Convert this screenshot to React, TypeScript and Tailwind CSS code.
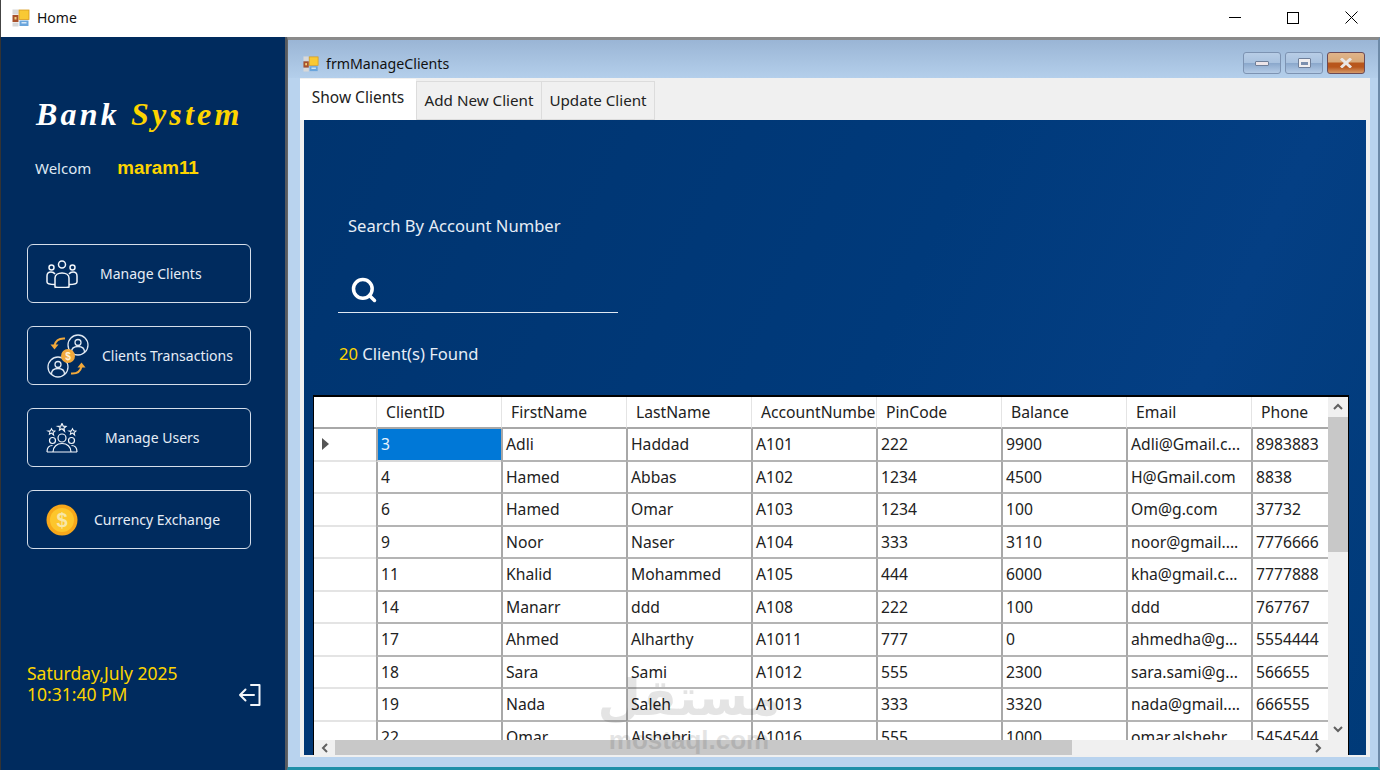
import React from 'react';
import { Search } from 'lucide-react';

const COLS = 'grid grid-cols-[62px_125px_125px_125px_125px_125px_125px_125px_77px]';

const headers = ['', 'ClientID', 'FirstName', 'LastName', 'AccountNumber', 'PinCode', 'Balance', 'Email', 'Phone'];

const rows = [
  ['3', 'Adli', 'Haddad', 'A101', '222', '9900', 'Adli@Gmail.c...', '8983883'],
  ['4', 'Hamed', 'Abbas', 'A102', '1234', '4500', 'H@Gmail.com', '8838'],
  ['6', 'Hamed', 'Omar', 'A103', '1234', '100', 'Om@g.com', '37732'],
  ['9', 'Noor', 'Naser', 'A104', '333', '3110', 'noor@gmail....', '7776666'],
  ['11', 'Khalid', 'Mohammed', 'A105', '444', '6000', 'kha@gmail.c...', '7777888'],
  ['14', 'Manarr', 'ddd', 'A108', '222', '100', 'ddd', '767767'],
  ['17', 'Ahmed', 'Alharthy', 'A1011', '777', '0', 'ahmedha@g...', '5554444'],
  ['18', 'Sara', 'Sami', 'A1012', '555', '2300', 'sara.sami@g...', '566655'],
  ['19', 'Nada', 'Saleh', 'A1013', '333', '3320', 'nada@gmail....', '666555'],
  ['22', 'Omar', 'Alshehri', 'A1016', '555', '1000', 'omar.alshehr...', '5454544'],
];

const AppIcon = ({ size = 18 }: { size?: number }) => (
  <svg width={size} height={size} viewBox="0 0 18 18" className="shrink-0">
    <rect x="0.5" y="0.5" width="6" height="5" fill="#d8d8d8" />
    <rect x="0.5" y="6" width="6" height="7" fill="#a8502a" />
    <rect x="2.5" y="8" width="2" height="2.5" fill="#f0d080" />
    <rect x="0.5" y="13.5" width="6" height="4" fill="#d8d8d8" />
    <rect x="7" y="1" width="10" height="9.5" fill="#f9c934" stroke="#d79a1c" strokeWidth="0.8" />
    <rect x="7.5" y="11.5" width="9" height="5.5" fill="#6aa5dc" />
    <rect x="9.5" y="13" width="5" height="1.5" fill="#d6e8f8" />
  </svg>
);

const PeopleIcon = () => (
  <svg width="32" height="28" viewBox="0 0 32 28" fill="none" stroke="#f2f6fb" strokeWidth="1.5">
    <circle cx="16" cy="4.5" r="3.5" />
    <circle cx="5.5" cy="7.5" r="2.5" />
    <circle cx="26.5" cy="7.5" r="2.5" />
    <path d="M9 27v-9c0-3 3-5 7-5s7 2 7 5v9c-3 .8-11 .8-14 0z" />
    <path d="M9 14c-1-1.500-2.500-2-4-2-2.500 0-4 1.500-4 4v6c0 1.500 3 2.500 8 2.500" />
    <path d="M23 14c1-1.500 2.500-2 4-2 2.500 0 4 1.500 4 4v6c0 1.500-3 2.500-8 2.500" />
  </svg>
);

const TransactionsIcon = () => (
  <svg width="44" height="44" viewBox="0 0 44 44" fill="none">
    <circle cx="32" cy="11" r="10" stroke="#dfe8f2" strokeWidth="1.3" />
    <circle cx="32" cy="8.500" r="3" stroke="#dfe8f2" strokeWidth="1.3" />
    <path d="M25.500 18c0-4 3-5.500 6.500-5.500s6.500 1.500 6.500 5.500" stroke="#dfe8f2" strokeWidth="1.3" />
    <circle cx="12" cy="33" r="10" stroke="#dfe8f2" strokeWidth="1.3" />
    <circle cx="12" cy="30.500" r="3" stroke="#dfe8f2" strokeWidth="1.3" />
    <path d="M5.500 40c0-4 3-5.500 6.500-5.500s6.500 1.500 6.500 5.500" stroke="#dfe8f2" strokeWidth="1.3" />
    <circle cx="22" cy="22" r="7" fill="#f2a93b" />
    <text x="22" y="25.500" textAnchor="middle" fontSize="10" fontWeight="700" fill="#fff3d8" fontFamily="'Liberation Sans', sans-serif">$</text>
    <path d="M19 4.500C13 4 9.500 7 8.500 11.500" stroke="#f2a93b" strokeWidth="2" />
    <path d="M4.500 10.500l4 5 4-5z" fill="#f2a93b" />
    <path d="M25 39.500c6 .5 9.500-2.500 10.500-7" stroke="#f2a93b" strokeWidth="2" />
    <path d="M31.500 33.500l4-5 4 5z" fill="#f2a93b" />
  </svg>
);

const Star = ({ x, y, s }: { x: number; y: number; s: number }) => (
  <path
    transform={`translate(${x} ${y}) scale(${s})`}
    d="M0-4l1.200 2.600 2.800.3-2.100 1.900.6 2.800L0 1.200-2.500 2.600l.6-2.800L-4-1.100l2.800-.3z"
  />
);

const UsersIcon = () => (
  <svg width="32" height="30" viewBox="0 0 32 30" fill="none" stroke="#f2f6fb" strokeWidth="1.2">
    <Star x={16} y={4.5} s={1} />
    <Star x={5.5} y={9} s={0.85} />
    <Star x={26.5} y={9} s={0.85} />
    <circle cx="16" cy="15" r="4" />
    <circle cx="6.500" cy="17.500" r="3" />
    <circle cx="25.500" cy="17.500" r="3" />
    <path d="M7 29c0-5.500 4-8.500 9-8.500s9 3 9 8.500" />
    <path d="M1 29c0-4 2-6.500 5.500-6.500M31 29c0-4-2-6.500-5.500-6.500M1 29h30" />
  </svg>
);

const CoinIcon = () => (
  <svg width="32" height="32" viewBox="0 0 32 32">
    <circle cx="16" cy="16" r="15.500" fill="#f7a81b" />
    <circle cx="16" cy="16" r="12" fill="#fdc62c" />
    <text x="16" y="23" textAnchor="middle" fontSize="20" fontWeight="700" fill="#f7e7a8" fontFamily="'Liberation Sans', sans-serif">$</text>
  </svg>
);

const LogoutIcon = () => (
  <svg width="24" height="24" viewBox="0 0 24 24" fill="none" stroke="#f2f6fb" strokeWidth="2" strokeLinecap="round" strokeLinejoin="round">
    <path d="M13 2h8.500v20H13" />
    <path d="M16 12H2M7.500 6.500L2 12l5.500 5.500" />
  </svg>
);

const NavButton = ({ icon, label, iconClass, labelClass }: { icon: React.ReactNode; label: string; iconClass: string; labelClass: string }) => (
  <div className="h-[59px] w-[224px] rounded-[6px] border border-[#d5deea] flex items-center">
    <div className={`flex items-center justify-center shrink-0 ${iconClass}`}>{icon}</div>
    <span className={`text-[14px] text-[#e6edf6] whitespace-nowrap ${labelClass}`}>{label}</span>
  </div>
);

const Arrow = ({ d }: { d: string }) => (
  <svg width="12" height="12" viewBox="0 0 12 12" fill="none" stroke="#606060" strokeWidth="2">
    <path d={d} />
  </svg>
);

const WinBtn = ({ children, red }: { children: React.ReactNode; red?: boolean }) => (
  <div
    className={`h-[22px] w-[38px] rounded-[3px] border flex items-center justify-center ${
      red
        ? 'border-[#6b4a55] bg-[linear-gradient(#e0b48a_0%,#d8a878_45%,#b8561c_50%,#b8561c_70%,#d59a6a_100%)]'
        : 'border-[#7d93b2] bg-[linear-gradient(#b8cde6_0%,#a9c2df_48%,#8ba8cc_52%,#b4cbe6_100%)]'
    }`}
  >
    {children}
  </div>
);

export default function App() {
  return (
    <div className="w-[1381px] h-[770px] overflow-hidden flex flex-col bg-white text-[#1a1a1a] font-['Noto_Sans',sans-serif]">
      {/* title bar */}
      <div className="h-[37px] shrink-0 flex items-center pl-[11px] pb-[2px] bg-white border-l border-[#444]">
        <AppIcon />
        <span className="ml-[7px] text-[14px] text-[#111]">Home</span>
        <div className="ml-auto flex items-center">
          <div className="w-[12px] h-px bg-black mr-[46px]" />
          <div className="w-[12px] h-[12px] border border-black mr-[46px]" />
          <svg width="13" height="13" viewBox="0 0 13 13" stroke="#000" className="mr-[23px]">
            <path d="M.5.500l12 12M12.500.500l-12 12" />
          </svg>
        </div>
      </div>

      <div className="flex-1 min-h-0 flex">
        {/* sidebar */}
        <div className="w-[287px] shrink-0 bg-[#002b5e] border-l border-[#333] border-r-2 border-r-[#55595f] flex flex-col pl-[26px]">
          <div className="mt-[57px] ml-[9px] h-[40px] flex items-center text-[32px] italic font-bold tracking-[3.200px] whitespace-nowrap font-['Liberation_Serif',serif]">
            <span className="text-white">Bank</span>
            <span className="ml-[11px] text-[#fdd400]">System</span>
          </div>
          <div className="mt-[22px] ml-[8px] h-[24px] flex items-center whitespace-nowrap">
            <span className="text-[15px] text-[#dfe8f3]">Welcom</span>
            <span className="ml-[26px] text-[18.800px] font-bold text-[#fdd400] font-['Liberation_Sans',sans-serif]">maram11</span>
          </div>
          <div className="mt-[64px] flex flex-col gap-[23px]">
            <NavButton icon={<PeopleIcon />} label="Manage Clients" iconClass="w-[34px] ml-[17px]" labelClass="ml-[21px]" />
            <NavButton icon={<TransactionsIcon />} label="Clients Transactions" iconClass="w-[44px] ml-[18px]" labelClass="ml-[12px]" />
            <NavButton icon={<UsersIcon />} label="Manage Users" iconClass="w-[34px] ml-[17px]" labelClass="ml-[26px]" />
            <NavButton icon={<CoinIcon />} label="Currency Exchange" iconClass="w-[34px] ml-[17px]" labelClass="ml-[15px]" />
          </div>
          <div className="mt-[112px] flex items-center">
            <div className="text-[17.500px] leading-[21px] text-[#fdd400] whitespace-nowrap">
              <div>Saturday,July 2025</div>
              <div>10:31:40 PM</div>
            </div>
            <div className="ml-[60px] mt-[22px]">
              <LogoutIcon />
            </div>
          </div>
        </div>

        {/* child window */}
        <div className="flex-1 min-w-0 flex flex-col bg-[#b9d3ee] border-t-[3px] border-t-[#8a8a8a] border-l border-l-[#666] border-b-[3px] border-b-[#1f8fa8] border-r-[2px] border-r-[#6d8aa8] mr-px">
          <div className="h-[38px] shrink-0 flex items-center pt-[10px] pl-[15px] pr-[13px] bg-[linear-gradient(#9ab5d5,#b4cfeb)]">
            <AppIcon size={16} />
            <span className="ml-[7px] text-[14.200px] text-[#111]">frmManageClients</span>
            <div className="ml-auto flex items-center gap-[4px] -mt-[2px]">
              <WinBtn>
                <div className="w-[14px] h-[5px] rounded-[1px] bg-[#ece4e8] border border-[#6f7f99]" />
              </WinBtn>
              <WinBtn>
                <div className="w-[13px] h-[10px] rounded-[1px] bg-[#f1eff0] border border-[#6f7f99] flex items-center justify-center">
                  <div className="w-[7px] h-[3px] bg-[#7c90ae]" />
                </div>
              </WinBtn>
              <WinBtn red>
                <svg width="14" height="10" viewBox="0 0 14 10" stroke="#e9e6e6" strokeWidth="3">
                  <path d="M2 .500l10 9M12 .500l-10 9" />
                </svg>
              </WinBtn>
            </div>
          </div>

          <div className="flex-1 min-h-0 ml-[12px] mr-[8px] mb-[10px] bg-[#f0f0f0] flex flex-col">
            {/* tabs */}
            <div className="h-[42px] shrink-0 flex items-end whitespace-nowrap">
              <div className="h-[41px] w-[116px] bg-white flex items-center justify-center text-[15.500px] text-[#222] pb-[4px]">Show Clients</div>
              <div className="h-[39px] w-[126px] border border-[#dcdcdc] flex items-center justify-center text-[15.200px] text-[#222]">Add New Client</div>
              <div className="h-[39px] w-[113px] border border-[#dcdcdc] border-l-0 flex items-center justify-center text-[15.200px] text-[#222]">Update Client</div>
            </div>

            {/* tab page */}
            <div className="flex-1 min-h-0 mx-[4px] mb-[2px] bg-[linear-gradient(115deg,#00346f_0%,#003a7b_50%,#043f84_75%,#003a78_100%)] flex flex-col pl-[9px] pr-[17px] text-[#e6edf6]">
              <div className="mt-[94px] ml-[35px] text-[16.600px] leading-[24px] whitespace-nowrap">Search By Account Number</div>
              <div className="mt-[30px] ml-[25px] w-[280px] h-[45px] border-b border-[#dfe8f3] flex items-center pl-[12px]">
                <Search size={28} color="#ffffff" strokeWidth={3} />
              </div>
              <div className="mt-[29px] ml-[26px] text-[16.600px] leading-[24px] whitespace-nowrap">
                <span className="text-[#fdd400]">20</span> Client(s) Found
              </div>

              {/* data grid */}
              <div className="relative mt-[29px] flex-1 min-h-0 bg-white border-t-2 border-l border-r border-black flex text-[#222] overflow-hidden">
                <div className="w-[1014px] shrink-0 flex flex-col">
                  <div className="flex-1 min-h-0 overflow-hidden">
                    <div className={`${COLS} h-[32px] text-[15.700px]`}>
                      {headers.map((h, i) => (
                        <div
                          key={i}
                          className={`overflow-hidden whitespace-nowrap flex items-center pt-[2px] border-b-2 border-[#a8a8a8] ${
                            i === 0 ? '' : 'pl-[9px] border-l border-l-[#e4e4e4]'
                          }`}
                        >
                          {h}
                        </div>
                      ))}
                    </div>
                    {rows.map((row, r) => (
                      <div key={r} className={`${COLS} h-[32.500px] text-[15.700px]`}>
                        <div className="border-b-2 border-[#e4e4e4] flex items-center pl-[8px]">
                          {r === 0 && (
                            <svg width="8" height="12" viewBox="0 0 8 12">
                              <path d="M0 0l7 6-7 6z" fill="#555" />
                            </svg>
                          )}
                        </div>
                        {row.map((cell, c) => (
                          <div
                            key={c}
                            className={`overflow-hidden whitespace-nowrap flex items-center pl-[3px] pt-[2px] border-l-2 border-l-[#a8a8a8] border-b-2 ${
                              r === 0 && c === 0 ? 'bg-[#0078d7] text-[#e6f2fc] border-b-[#d8d8d8]' : 'border-b-[#b4b4b4]'
                            }`}
                          >
                            {cell}
                          </div>
                        ))}
                      </div>
                    ))}
                  </div>
                  <div className="h-[15px] shrink-0 bg-[#f0f0f0] flex items-center">
                    <div className="w-[21px] shrink-0 flex justify-center">
                      <Arrow d="M8 2L4 6l4 4" />
                    </div>
                    <div className="w-[737px] h-full bg-[#c8c8c8]" />
                    <div className="ml-auto w-[21px] flex justify-center">
                      <Arrow d="M4 2l4 4-4 4" />
                    </div>
                  </div>
                </div>
                <div className="flex-1 flex flex-col bg-[#f0f0f0]">
                  <div className="h-[20px] flex items-center justify-center">
                    <Arrow d="M2 8l4-4 4 4" />
                  </div>
                  <div className="h-[135px] bg-[#c8c8c8]" />
                  <div className="mt-auto h-[20px] mb-[16px] flex items-center justify-center">
                    <Arrow d="M2 4l4 4 4-4" />
                  </div>
                </div>

                {/* mostaql watermark sits over the grid */}
                <div className="absolute left-[289px] top-[272px] w-[172px] flex flex-col items-center text-[#000] opacity-[0.1] pointer-events-none whitespace-nowrap">
                  <span className="text-[50px] leading-[58px] font-bold font-['DejaVu_Sans',sans-serif]">مستقل</span>
                  <span className="text-[26px] leading-[26px] font-bold font-['Liberation_Sans',sans-serif]">mostaql.com</span>
                </div>
              </div>
            </div>
          </div>
        </div>
      </div>
    </div>
  );
}
